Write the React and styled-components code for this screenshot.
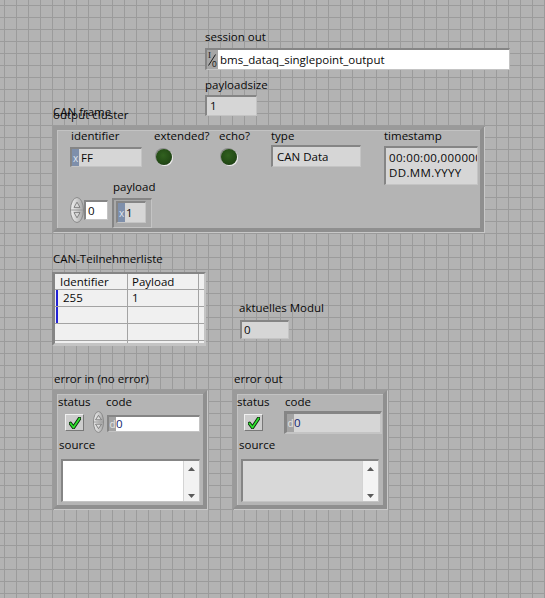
import React from 'react';
import styled, { createGlobalStyle } from 'styled-components';

const Global = createGlobalStyle`
  html, body { margin: 0; padding: 0; background: #b3b3b3; }
  #root { width: 545px; height: 598px; }
`;

const Panel = styled.div`
  width: 545px;
  height: 598px;
  overflow: hidden;
  box-sizing: border-box;
  padding-top: 30px;
  background-color: #b3b3b3;
  background-image:
    linear-gradient(to right, #9b9b9b 1px, transparent 1px),
    linear-gradient(to bottom, #9b9b9b 1px, transparent 1px);
  background-size: 12px 12px;
  background-position: 4px 5px;
  font-family: "Open Sans", "Noto Sans", "DejaVu Sans", sans-serif;
  font-size: 11.5px;
  color: #080808;
  display: flex;
  flex-direction: column;
`;

const Stack = styled.div`
  display: flex;
  flex-direction: column;
  align-items: flex-start;
  margin-left: ${p => p.$ml || 0}px;
  margin-top: ${p => p.$mt || 0}px;
  width: ${p => (p.$w ? `${p.$w}px` : 'auto')};
  flex-shrink: 0;
`;

const Row = styled.div`
  display: flex;
  align-items: flex-start;
  margin-left: ${p => p.$ml || 0}px;
  margin-top: ${p => p.$mt || 0}px;
  padding-left: ${p => p.$pl || 0}px;
  height: ${p => (p.$h ? `${p.$h}px` : 'auto')};
  flex-shrink: 0;
`;

const Label = styled.div`
  height: 14px;
  line-height: 14px;
  white-space: nowrap;
  margin-left: ${p => p.$ml || 0}px;
  margin-top: ${p => p.$mt || 0}px;
`;

const LabelStack = styled.div`
  position: relative;
`;

const GhostLabel = styled(Label)`
  position: absolute;
  left: 0;
  top: -3px;
`;

const Field = styled.div`
  box-sizing: border-box;
  width: ${p => p.$w}px;
  height: ${p => p.$h}px;
  margin-top: ${p => p.$mt || 0}px;
  margin-left: ${p => p.$ml || 0}px;
  border-style: solid;
  border-width: ${p => (p.$thick ? '3px 2px 2px 3px' : '2px 1px 1px 2px')};
  border-color: #858585 #c4c4c4 #c4c4c4 #858585;
  background: ${p => p.$bg || '#d6d6d6'};
  display: flex;
  align-items: ${p => (p.$top ? 'stretch' : 'center')};
  overflow: hidden;
  flex-shrink: 0;
`;

const FieldText = styled.div`
  padding-left: ${p => (p.$pl === undefined ? 3 : p.$pl)}px;
  padding-top: ${p => p.$pt || 0}px;
  line-height: ${p => p.$lh || 14}px;
  letter-spacing: ${p => p.$ls || 0}px;
  white-space: nowrap;
  color: ${p => p.$color || '#080808'};
  overflow: hidden;
`;

const Radix = styled.div`
  width: 7px;
  align-self: stretch;
  flex-shrink: 0;
  background: ${p => (p.$tone === 'gray' ? '#a3a3a3' : '#7e8fab')};
  color: ${p => (p.$tone === 'gray' ? '#e4e4e4' : '#dfe5ef')};
  font-size: 10px;
  display: flex;
  align-items: center;
  justify-content: center;
`;

const VisaWrap = styled.div`
  width: 11px;
  align-self: stretch;
  background: #a6a6a6;
  flex-shrink: 0;
  display: flex;
`;

const VisaIcon = () => (
  <VisaWrap>
    <svg width="11" height="18" viewBox="0 0 11 18">
      <text x="1" y="8" fontSize="9" fontFamily="Liberation Serif, serif" fill="#1a1a1a">I</text>
      <line x1="1.5" y1="15.5" x2="8.5" y2="4.5" stroke="#1a1a1a" strokeWidth="1" />
      <text x="5" y="17" fontSize="8.5" fontFamily="Liberation Sans, sans-serif" fill="#1a1a1a">0</text>
    </svg>
  </VisaWrap>
);

const Cluster = styled.div`
  box-sizing: border-box;
  width: ${p => p.$w}px;
  height: ${p => p.$h}px;
  margin-top: ${p => p.$mt || 0}px;
  border: 4px solid;
  border-color: #9a9a9a #8f8f8f #8f8f8f #9a9a9a;
  box-shadow: inset 1px 1px 0 #c3c3c3, 1px 1px 0 #c8c8c8;
  background: #b4b4b4;
  display: flex;
  flex-direction: column;
`;

const Led = styled.div`
  width: 16px;
  height: 16px;
  border-radius: 50%;
  margin-top: ${p => p.$mt || 0}px;
  margin-left: ${p => p.$ml || 0}px;
  background: radial-gradient(circle at 45% 40%, #31611f 0%, #244c16 55%, #163210 100%);
  box-shadow: 1px 1px 0 0 #ececec, -1px -1px 0 0 #8c8c8c;
`;

const SpinBox = styled.div`
  margin-top: ${p => p.$mt || 0}px;
  flex-shrink: 0;
  display: flex;
`;

const Spinner = ({ w, h, mt }) => (
  <SpinBox $mt={mt}>
    <svg width={w} height={h} viewBox={`0 0 ${w} ${h}`}>
      <defs>
        <linearGradient id={`sg${w}`} x1="0" x2="1" y1="0" y2="0">
          <stop offset="0" stopColor="#f2f2f2" />
          <stop offset="1" stopColor="#a6a6a6" />
        </linearGradient>
      </defs>
      <ellipse cx={w / 2} cy={h / 2} rx={w / 2 - 0.5} ry={h / 2 - 0.5} fill={`url(#sg${w})`} stroke="#8a8a8a" />
      <line x1="1" y1={h / 2} x2={w - 1} y2={h / 2} stroke="#9a9a9a" />
      <path d={`M${w / 2} ${h * 0.2} L${w / 2 + 3} ${h * 0.4} L${w / 2 - 3} ${h * 0.4} Z`} fill="#dcdcdc" stroke="#6e6e6e" strokeWidth="0.8" />
      <path d={`M${w / 2} ${h * 0.8} L${w / 2 + 3} ${h * 0.6} L${w / 2 - 3} ${h * 0.6} Z`} fill="#dcdcdc" stroke="#6e6e6e" strokeWidth="0.8" />
    </svg>
  </SpinBox>
);

const ArrayBox = styled.div`
  box-sizing: border-box;
  width: 40px;
  height: 30px;
  margin-top: 4px;
  border-style: solid;
  border-width: 2px 1px 1px 2px;
  border-color: #858585 #c4c4c4 #c4c4c4 #858585;
  background: #a9a9a9;
  padding: 1px 0 0 2px;
`;

const CheckBtn = styled.div`
  box-sizing: border-box;
  width: 19px;
  height: 17px;
  margin-top: ${p => p.$mt || 0}px;
  margin-left: ${p => p.$ml || 0}px;
  background: #cdcdcd;
  border: 1px solid;
  border-color: #f0f0f0 #787878 #787878 #f0f0f0;
  display: flex;
  align-items: center;
  justify-content: center;
`;

const Check = () => (
  <svg width="12" height="12" viewBox="0 0 12 12">
    <path d="M1.5 6.5 L4.5 10.5 L10.5 1.5" fill="none" stroke="#0b2a0b" strokeWidth="3.6" strokeLinecap="round" strokeLinejoin="round" />
    <path d="M1.5 6.5 L4.5 10.5 L10.5 1.5" fill="none" stroke="#2fe22f" strokeWidth="1.8" strokeLinecap="round" strokeLinejoin="round" />
  </svg>
);

const TextArea = styled(Field)`
  align-items: stretch;
  justify-content: space-between;
`;

const ScrollBar = styled.div`
  width: 15px;
  flex-shrink: 0;
  background: ${p => p.$bg || '#f2f2f2'};
  border-left: 1px solid #d4d4d4;
  display: flex;
  flex-direction: column;
  justify-content: space-between;
  align-items: center;
  padding: 6px 0 3px;
`;

const Arrow = ({ down }) => (
  <svg width="7" height="4" viewBox="0 0 7 4">
    <path d={down ? 'M0 0 L7 0 L3.5 4 Z' : 'M0 4 L7 4 L3.5 0 Z'} fill="#5a5a5a" />
  </svg>
);

const TableFrame = styled.div`
  box-sizing: border-box;
  width: 154px;
  height: 74px;
  margin-top: 6px;
  border-style: solid;
  border-width: 2px 2px 3px 3px;
  border-color: #858585 #c4c4c4 #c4c4c4 #858585;
  overflow: hidden;
`;

const TableGrid = styled.div`
  display: grid;
  grid-template-columns: 72px 70px 5px;
  grid-template-rows: 15px 16px 16px 16px 1fr;
  gap: 1px;
  background: #a3a3a3;
  height: 100%;
`;

const Cell = styled.div`
  background: #f0f0f0;
  padding-left: ${p => p.$pl || 0}px;
  line-height: ${p => (p.$head ? 15 : 16)}px;
  white-space: nowrap;
  overflow: hidden;
  box-shadow: ${p => (p.$mark ? 'inset 1px 0 0 #f0f0f0, inset 3px 0 0 #2323d6' : 'none')};
`;

const cells = [
  ['Identifier', 'Payload', ''],
  ['255', '1', ''],
  ['', '', ''],
  ['', '', ''],
  ['', '', ''],
];

export default function App() {
  return (
    <>
      <Global />
      <Panel>
        <Stack $ml={205}>
          <Label>session out</Label>
          <Field $w={305} $h={22} $mt={4} $bg="#ffffff">
            <VisaIcon />
            <FieldText $pl={2}>bms_dataq_singlepoint_output</FieldText>
          </Field>
          <Label $mt={8}>payloadsize</Label>
          <Field $w={52} $h={21} $mt={3}>
            <FieldText>1</FieldText>
          </Field>
        </Stack>

        <Stack $ml={53} $mt={-8}>
          <LabelStack>
            <Label>output cluster</Label>
            <GhostLabel>CAN frame</GhostLabel>
          </LabelStack>
          <Cluster $w={431} $h={106} $mt={4}>
            <Row $h={51} $mt={-1} $pl={13}>
              <Stack $w={84}>
                <Label $ml={1}>identifier</Label>
                <Field $w={72} $h={20} $mt={4}>
                  <Radix>x</Radix>
                  <FieldText $pl={2}>FF</FieldText>
                </Field>
              </Stack>
              <Stack $w={65}>
                <Label>extended?</Label>
                <Led $mt={6} $ml={2} />
              </Stack>
              <Stack $w={52}>
                <Label>echo?</Label>
                <Led $mt={6} $ml={2} />
              </Stack>
              <Stack $w={113}>
                <Label>type</Label>
                <Field $w={90} $h={22} $mt={2}>
                  <FieldText $pl={4}>CAN Data</FieldText>
                </Field>
              </Stack>
              <Stack>
                <Label>timestamp</Label>
                <Field $w={94} $h={39} $mt={3} $top>
                  <FieldText $pl={3} $pt={3} $lh={14.5} $ls={0.35}>
                    00:00:00,0000000
                    <br />
                    DD.MM.YYYY
                  </FieldText>
                </Field>
              </Stack>
            </Row>
            <Row $pl={13}>
              <Spinner w={14} h={26} mt={17} />
              <Field $w={24} $h={20} $mt={20} $bg="#ffffff">
                <FieldText $pl={2}>0</FieldText>
              </Field>
              <Stack $ml={4}>
                <Label $ml={1}>payload</Label>
                <ArrayBox>
                  <Field $w={30} $h={22}>
                    <Radix>x</Radix>
                    <FieldText $pl={1}>1</FieldText>
                  </Field>
                </ArrayBox>
              </Stack>
            </Row>
          </Cluster>
        </Stack>

        <Row $ml={52} $mt={20}>
          <Stack>
            <Label $ml={1}>CAN-Teilnehmerliste</Label>
            <TableFrame>
              <TableGrid>
                {cells.map((r, ri) =>
                  r.map((c, ci) => (
                    <Cell
                      key={`${ri}-${ci}`}
                      $head={ri === 0}
                      $pl={ri === 0 ? (ci === 0 ? 5 : 4) : ci === 0 ? 8 : 4}
                      $mark={ci === 0 && (ri === 1 || ri === 2)}
                    >
                      {c}
                    </Cell>
                  ))
                )}
              </TableGrid>
            </TableFrame>
          </Stack>
          <Stack $ml={33} $mt={49}>
            <Label>aktuelles Modul</Label>
            <Field $w={49} $h={19} $mt={5} $ml={1}>
              <FieldText $pl={2}>0</FieldText>
            </Field>
          </Stack>
        </Row>

        <Row $ml={53} $mt={26}>
          <Stack>
            <Label $ml={1}>error in (no error)</Label>
            <Cluster $w={154} $h={119} $mt={4}>
              <Row $h={43} $mt={1}>
                <Stack $w={36}>
                  <Label $ml={1}>status</Label>
                  <CheckBtn $mt={5} $ml={8}>
                    <Check />
                  </CheckBtn>
                </Stack>
                <Spinner w={11} h={22} mt={16} />
                <Stack $ml={2}>
                  <Label>code</Label>
                  <Field $w={93} $h={17} $mt={6} $ml={1} $bg="#ffffff">
                    <Radix $tone="gray">d</Radix>
                    <FieldText $pl={0} $color="#101e6e">0</FieldText>
                  </Field>
                </Stack>
              </Row>
              <Label $ml={2}>source</Label>
              <TextArea $w={139} $h={43} $mt={7} $ml={4} $bg="#ffffff">
                <div />
                <ScrollBar>
                  <Arrow />
                  <Arrow down />
                </ScrollBar>
              </TextArea>
            </Cluster>
          </Stack>
          <Stack $ml={26}>
            <Label $ml={1}>error out</Label>
            <Cluster $w={154} $h={119} $mt={4}>
              <Row $h={43} $mt={1}>
                <Stack $w={47}>
                  <Label>status</Label>
                  <CheckBtn $mt={5} $ml={7}>
                    <Check />
                  </CheckBtn>
                </Stack>
                <Stack>
                  <Label $ml={1}>code</Label>
                  <Field $w={98} $h={23} $mt={2} $thick>
                    <Radix $tone="gray">d</Radix>
                    <FieldText $pl={0} $color="#101e6e">0</FieldText>
                  </Field>
                </Stack>
              </Row>
              <Label $ml={2}>source</Label>
              <TextArea $w={138} $h={43} $mt={7} $ml={4} $bg="#d8d8d8">
                <div />
                <ScrollBar $bg="#f4f4f4">
                  <Arrow />
                  <Arrow down />
                </ScrollBar>
              </TextArea>
            </Cluster>
          </Stack>
        </Row>
      </Panel>
    </>
  );
}
